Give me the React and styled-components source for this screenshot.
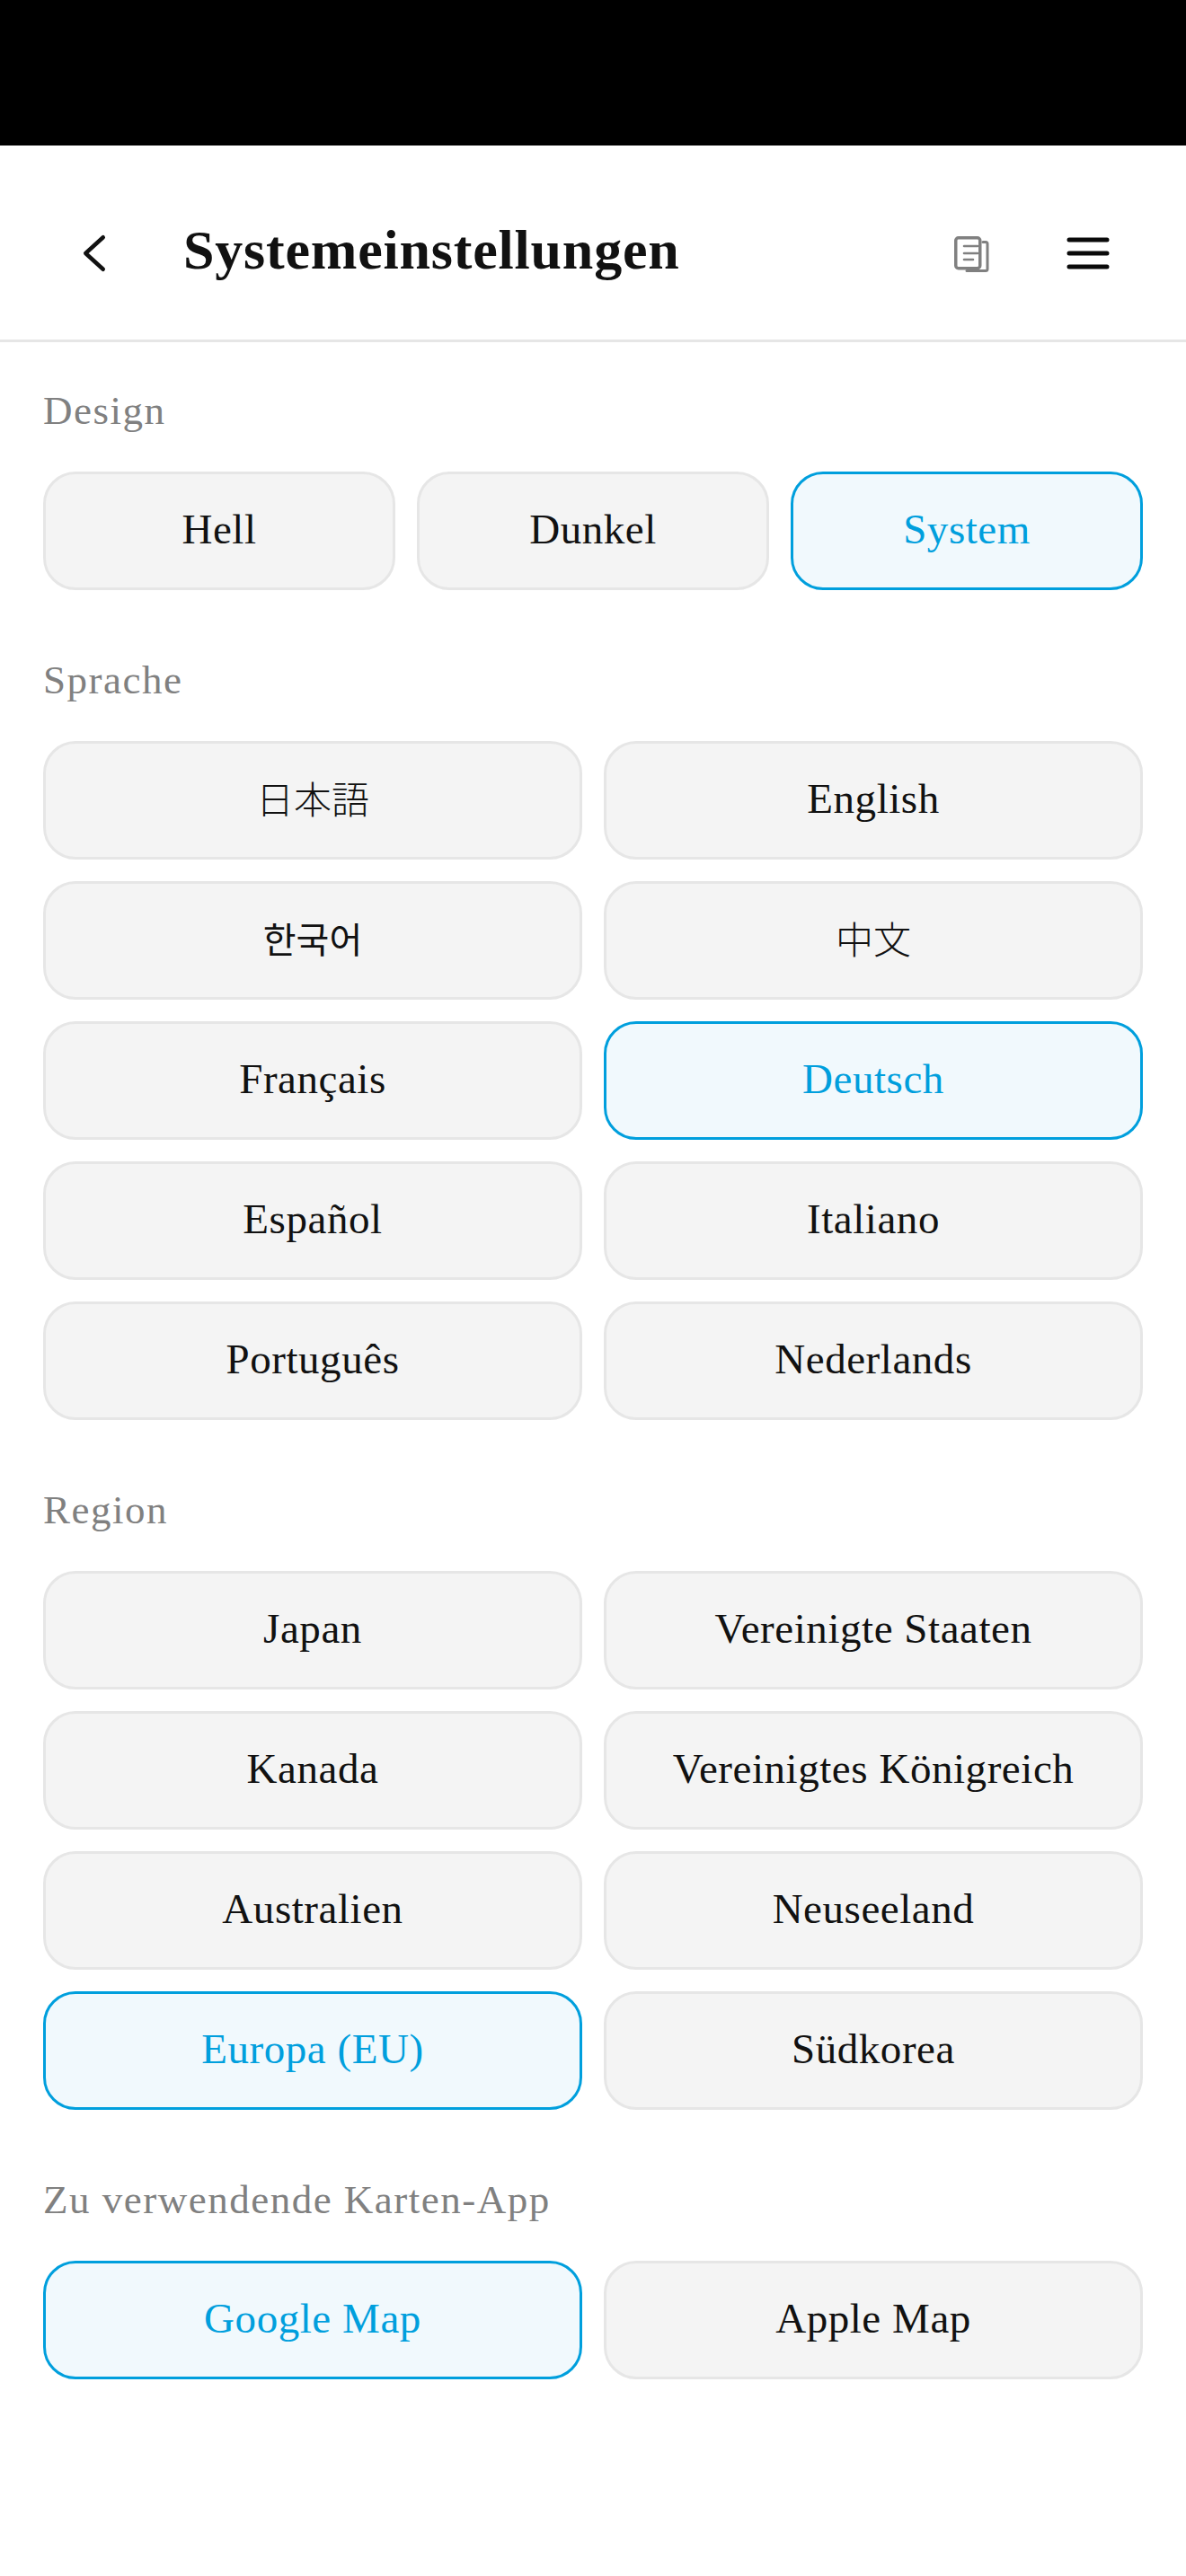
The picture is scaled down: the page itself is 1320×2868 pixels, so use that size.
import React from "react";
import styled, { createGlobalStyle } from "styled-components";

const Global = createGlobalStyle`
  html, body { margin: 0; padding: 0; background: #fff; }
  body { font-family: "Liberation Serif", "Noto Sans CJK JP", serif; color: #111; }
`;

const Page = styled.div`
  width: 1320px;
  height: 2868px;
  background: #fff;
  overflow: hidden;
`;

const StatusBar = styled.div`
  height: 162px;
  background: #000;
`;

const Header = styled.header`
  height: 219px;
  box-sizing: border-box;
  border-bottom: 3px solid #e6e6e6;
  display: flex;
  align-items: center;
  padding: 24px 85px 0 92px;
`;

const BackIcon = styled.svg`
  width: 26px;
  height: 44px;
  flex: none;
`;

const Title = styled.h1`
  flex: 1;
  margin: -8px 0 0 86px;
  font-size: 62px;
  line-height: 80px;
  font-weight: 700;
  letter-spacing: 0.8px;
  color: #111;
`;

const DocIcon = styled.svg`
  width: 40px;
  height: 40px;
  flex: none;
  margin-top: 1px;
`;

const MenuIcon = styled.svg`
  width: 48px;
  height: 36px;
  flex: none;
  margin-left: 85px;
`;

const Content = styled.main`
  padding: 48px 48px 0;
  display: flex;
  flex-direction: column;
  gap: 72px;
`;

const Section = styled.section`
  display: flex;
  flex-direction: column;
  gap: 24px;
`;

const Label = styled.div`
  font-size: 45px;
  line-height: 56px;
  height: 72px;
  color: #808080;
  letter-spacing: 1.5px;
`;

const Grid = styled.div`
  display: grid;
  grid-template-columns: repeat(${(p) => p.$cols}, 1fr);
  gap: 24px;
`;

const Choice = styled.button`
  height: 132px;
  box-sizing: border-box;
  border-radius: 36px;
  border: 3px solid ${(p) => (p.$active ? "#009fdd" : "#e6e6e6")};
  background: ${(p) => (p.$active ? "#f1f9fd" : "#f4f4f4")};
  color: ${(p) => (p.$active ? "#009fdd" : "#111")};
  font-family: inherit;
  font-size: 47px;
  line-height: 52px;
  letter-spacing: 0.55px;
  padding: 0 0 4px;
  display: flex;
  align-items: center;
  justify-content: center;
`;

const CjkText = styled.span`
  font-family: ${(p) => (p.$ko ? '"Noto Sans CJK KR"' : '"Noto Sans CJK JP"')}, sans-serif;
  font-size: ${(p) => (p.$ko ? 40 : 42)}px;
  font-weight: ${(p) => (p.$ko ? 400 : 300)};
  letter-spacing: 0;
  margin-bottom: 3px;
`;

const sections = [
  { label: "Design", cols: 3, active: "System", items: ["Hell", "Dunkel", "System"] },
  {
    label: "Sprache",
    cols: 2,
    active: "Deutsch",
    items: ["日本語", "English", "한국어", "中文", "Français", "Deutsch", "Español", "Italiano", "Português", "Nederlands"],
  },
  {
    label: "Region",
    cols: 2,
    active: "Europa (EU)",
    items: ["Japan", "Vereinigte Staaten", "Kanada", "Vereinigtes Königreich", "Australien", "Neuseeland", "Europa (EU)", "Südkorea"],
  },
  { label: "Zu verwendende Karten-App", cols: 2, active: "Google Map", items: ["Google Map", "Apple Map"] },
];

const cjk = { "日本語": false, "中文": false, "한국어": true };

export default function App() {
  return (
    <Page>
      <Global />
      <StatusBar />
      <Header>
        <BackIcon viewBox="0 0 26 44" fill="none">
          <path d="M22.75 4.25 L3.25 22 L22.75 39.75" stroke="#111" strokeWidth="4.5" strokeLinecap="round" strokeLinejoin="round" />
        </BackIcon>
        <Title>Systemeinstellungen</Title>
        <DocIcon viewBox="0 0 40 40" fill="none" stroke="#808080" strokeLinecap="round" strokeLinejoin="round">
          <rect x="1.75" y="1.75" width="27" height="34" rx="3" strokeWidth="3.5" />
          <path d="M32 6.5h3a2 2 0 0 1 2 2V36.5a2 2 0 0 1-2 2H14" strokeWidth="3" />
          <path d="M11 11h15M11 19h15M11 26h10" strokeWidth="2.6" />
        </DocIcon>
        <MenuIcon viewBox="0 0 48 36" fill="none">
          <path d="M3 3h42M3 18h42M3 33h42" stroke="#0a0a0a" strokeWidth="5" strokeLinecap="round" />
        </MenuIcon>
      </Header>
      <Content>
        {sections.map((s) => (
          <Section key={s.label}>
            <Label>{s.label}</Label>
            <Grid $cols={s.cols}>
              {s.items.map((item) => (
                <Choice key={item} $active={item === s.active}>
                  {item in cjk ? <CjkText $ko={cjk[item]}>{item}</CjkText> : item}
                </Choice>
              ))}
            </Grid>
          </Section>
        ))}
      </Content>
    </Page>
  );
}
